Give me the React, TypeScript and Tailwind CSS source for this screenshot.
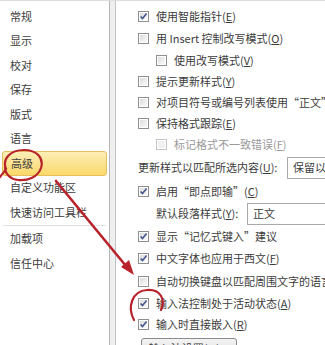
import React from 'react';

const FONT = { fontFamily: '"Noto Sans CJK SC", "Noto Sans", sans-serif' };

const NAV: (string | null)[] = ['常规', '显示', '校对', '保存', '版式', '语言', '高级', '自定义功能区', '快速访问工具栏', null, '加载项', '信任中心'];

type Row =
  | { kind: 'check'; text: React.ReactNode; checked?: boolean; indent?: boolean; disabled?: boolean; h: number }
  | { kind: 'select'; label: React.ReactNode; value: string; indent?: boolean; boxX: number; h: number };

const u = (c: string) => <span className="underline">{c}</span>;

const ROWS: Row[] = [
  { kind: 'check', text: <>使用智能指针({u('E')})</>, checked: true, h: 22 },
  { kind: 'check', text: <>用 Insert 控制改写模式({u('O')})</>, h: 22 },
  { kind: 'check', text: <>使用改写模式({u('V')})</>, indent: true, h: 22 },
  { kind: 'check', text: <>提示更新样式({u('Y')})</>, h: 21 },
  { kind: 'check', text: <>对项目符号或编号列表使用“正文”样式({u('N')})</>, h: 21 },
  { kind: 'check', text: <>保持格式跟踪({u('E')})</>, h: 21 },
  { kind: 'check', text: <>标记格式不一致错误({u('F')})</>, indent: true, disabled: true, h: 20 },
  { kind: 'select', label: <>更新样式以匹配所选内容({u('U')}):</>, value: '保留以前的格式', boxX: 149, h: 27 },
  { kind: 'check', text: <>启用“即点即输”({u('C')})</>, checked: true, h: 21 },
  { kind: 'select', label: <>默认段落样式({u('Y')}):</>, value: '正文', indent: true, boxX: 109, h: 23 },
  { kind: 'check', text: <>显示“记忆式键入”建议</>, checked: true, h: 22 },
  { kind: 'check', text: <>中文字体也应用于西文({u('F')})</>, checked: true, h: 23 },
  { kind: 'check', text: <>自动切换键盘以匹配周围文字的语言({u('K')})</>, h: 22 },
  { kind: 'check', text: <>输入法控制处于活动状态({u('A')})</>, checked: true, h: 22 },
  { kind: 'check', text: <>输入时直接嵌入({u('R')})</>, checked: true, h: 21 },
];

function Box({ checked, disabled }: { checked?: boolean; disabled?: boolean }) {
  return (
    <svg width="11" height="11" viewBox="0 0 11 11" className="shrink-0">
      <defs>
        <linearGradient id="cbg" x1="0" y1="0" x2="1" y2="1">
          <stop offset="0" stopColor="#dcdcdc" />
          <stop offset="1" stopColor="#fbfbfb" />
        </linearGradient>
      </defs>
      <rect x="0.5" y="0.5" width="10" height="10" fill="#fff" stroke={disabled ? '#c4c4c4' : '#8f8f8f'} />
      <rect x="2" y="2" width="7" height="7" fill={disabled ? '#f1f1f1' : 'url(#cbg)'} />
      {checked && <path d="M2.6 5.4 L4.5 7.6 L8.6 2.6" fill="none" stroke="#44578f" strokeWidth="1.6" />}
    </svg>
  );
}

export default function App() {
  return (
    <div className="relative flex h-[345px] w-[325px] overflow-hidden border-t border-[#dedede] bg-white text-[11px] leading-none text-[#3c3c3c]" style={FONT}>
      {/* Left category list */}
      <aside className="w-[110px] shrink-0 border-r border-[#b6b6b6] pt-[3px]">
        {NAV.map((n, i) =>
          n === null ? (
            <div key={i} className="mx-[3px] my-[0.5px] h-px bg-[#e2e2e2]" />
          ) : (
            <div
              key={i}
              className={`mx-[2px] flex h-[24.5px] items-center rounded-[3px] pl-[8px] ${
                n === '高级' ? 'border border-[#e6c060] bg-gradient-to-b from-[#fdeeb5] to-[#fbd869] pl-[7px]' : ''
              }`}
            >
              {n}
            </div>
          ),
        )}
      </aside>
      <div className="w-[6px] shrink-0 border-r border-[#c4c4c4] bg-[#efefef]" />

      {/* Options panel */}
      <main className="flex-1 whitespace-nowrap pl-[22px] pt-[4px]">
        {ROWS.map((r, i) =>
          r.kind === 'check' ? (
            <div key={i} className={`flex items-center gap-[7px] ${r.indent ? 'pl-[18px]' : ''} ${r.disabled ? 'text-[#9a9a9a]' : ''}`} style={{ height: r.h }}>
              <Box checked={r.checked} disabled={r.disabled} />
              <span>{r.text}</span>
            </div>
          ) : (
            <div key={i} className={`relative flex items-center ${r.indent ? 'pl-[18px]' : ''}`} style={{ height: r.h }}>
              <span>{r.label}</span>
              <div
                className="absolute flex h-[22px] w-[120px] items-center border border-[#a9a9a9] bg-white pl-[5px]"
                style={{ left: r.boxX }}
              >
                {r.value}
              </div>
            </div>
          ),
        )}
        <div className="ml-[3px] mt-[3px] flex h-[20px] w-[96px] items-center justify-center rounded-[3px] border border-[#8a8a8a] bg-gradient-to-b from-[#f4f4f4] to-[#dcdcdc]">
          输入法设置(M)...
        </div>
      </main>

      {/* Red annotations */}
      <svg className="pointer-events-none absolute inset-0" width="325" height="345" viewBox="0 0 325 345">
        <g fill="none" stroke="#b8222b" strokeWidth="2.2" strokeLinecap="round">
          <path d="M0 176 C 3 172, 5 170, 6 168 C 2 158, 10 149, 24 149 C 37 149, 44 157, 41 167 C 38 176, 28 180, 18 179 C 10 178, 5 173, 5 166" />
          <path d="M56 180 L 126 265" strokeWidth="2.6" />
          <path d="M134 319 C 127 306, 132 290, 147 289 C 160 288, 166 298, 161 309" />
        </g>
        <polygon points="134,274 121,266 129,259" fill="#b8222b" />
      </svg>
    </div>
  );
}
